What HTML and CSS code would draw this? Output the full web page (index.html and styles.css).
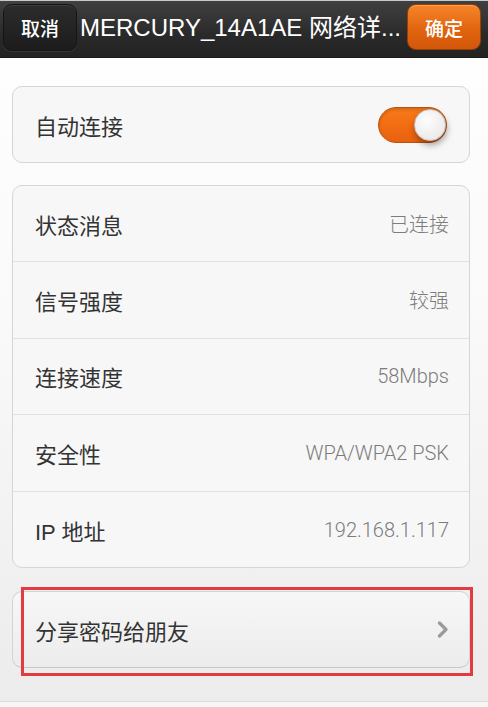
FILE: index.html
```html
<!DOCTYPE html>
<html lang="zh-CN">
<head>
<meta charset="utf-8">
<title>网络详情</title>
<link rel="stylesheet" href="styles.css">
</head>
<body>
<div class="page">
  <header class="topbar">
    <button class="btn btn-cancel">取消</button>
    <div class="title">MERCURY_14A1AE 网络详...</div>
    <button class="btn btn-ok">确定</button>
  </header>
  <main class="content">
    <section class="card">
      <div class="row">
        <span class="label">自动连接</span>
        <span class="toggle"><span class="knob"></span></span>
      </div>
    </section>
    <section class="card">
      <div class="row"><span class="label">状态消息</span><span class="value">已连接</span></div>
      <div class="row"><span class="label">信号强度</span><span class="value">较强</span></div>
      <div class="row"><span class="label">连接速度</span><span class="value">58Mbps</span></div>
      <div class="row"><span class="label">安全性</span><span class="value">WPA/WPA2 PSK</span></div>
      <div class="row"><span class="label">IP 地址</span><span class="value">192.168.1.117</span></div>
    </section>
    <section class="card card-action">
      <div class="row">
        <span class="label">分享密码给朋友</span>
        <svg class="chevron" width="12" height="17" viewBox="0 0 12 17"><path d="M2.5 2 L9 8.5 L2.5 15" fill="none" stroke="#9a9a9a" stroke-width="3.2" stroke-linecap="round" stroke-linejoin="round"/></svg>
      </div>
      <div class="highlight"></div>
    </section>
  </main>
  <footer class="bottom"></footer>
</div>
</body>
</html>
```
FILE: styles.css
```css
* { box-sizing: border-box; }
html, body { margin: 0; padding: 0; }
body {
  width: 488px;
  height: 707px;
  overflow: hidden;
  font-family: "Liberation Sans", "Noto Sans CJK SC", sans-serif;
  background: #ffffff;
}
.page {
  display: flex;
  flex-direction: column;
  height: 707px;
  background: linear-gradient(#ffffff 0px, #fafafa 300px, #ececec 700px);
}
.topbar {
  height: 58px;
  flex: none;
  display: flex;
  align-items: flex-start;
  padding: 3px 7px 0 3px;
  border-top: 1px solid #c9c9c9;
  background: linear-gradient(#404040, #2a2a2a 60%, #232323);
  border-bottom: 1px solid #1a1a1a;
}
.btn {
  flex: none;
  width: 74px;
  height: 47px;
  border-radius: 9px;
  font-family: "Noto Sans CJK SC", sans-serif;
  font-size: 19px;
  font-weight: 500;
  color: #ffffff;
  padding: 0;
  line-height: 45px;
}
.btn-cancel {
  background: linear-gradient(#2c2c2c, #1c1c1c);
  border: 1px solid #151515;
  box-shadow: inset 0 1px 0 rgba(255,255,255,0.08), 0 1px 0 rgba(255,255,255,0.08);
}
.btn-ok {
  height: 46px;
  background: linear-gradient(#f5862a, #e2640f 55%, #d2570a);
  border: 1px solid #9c3f05;
  box-shadow: inset 0 1px 0 rgba(255,255,255,0.25);
}
.title {
  flex: 1;
  min-width: 0;
  white-space: nowrap;
  overflow: hidden;
  color: #ffffff;
  font-size: 24px;
  line-height: 47px;
  padding-left: 3px;
}
.content {
  flex: 1;
  display: flex;
  flex-direction: column;
  gap: 22px;
  padding: 28px 18px 0 12px;
}
.card {
  position: relative;
  background: #f7f7f7;
  border: 1px solid #d6d6d6;
  border-radius: 10px;
}
.card + .card + .card { margin-top: 1px; }
.row {
  height: 76.6px;
  display: flex;
  align-items: center;
  justify-content: space-between;
  padding: 0 20px 0 22px;
  border-top: 1px solid #e2e2e2;
}
.row:first-child { border-top: none; height: 75px; }
.label {
  font-size: 22px;
  color: #333333;
}
.value {
  font-family: "Roboto", "Noto Sans CJK SC", sans-serif;
  font-weight: 300;
  font-size: 20px;
  color: #7c7c7c;
}
.toggle {
  position: relative;
  width: 69px;
  height: 36px;
  margin-right: 2px;
  border-radius: 18px;
  background: linear-gradient(#fa7a18, #e8600e);
  border: 1px solid #b85210;
  box-shadow: inset 0 2px 3px rgba(0,0,0,0.15);
}
.knob {
  position: absolute;
  right: 0px;
  top: 1px;
  width: 32px;
  height: 32px;
  border-radius: 50%;
  background: radial-gradient(circle at 40% 35%, #fdfdfd, #e4e4e4);
  border: 1px solid #c4c4c4;
  box-shadow: 1px 4px 6px rgba(0,0,0,0.35);
}
.card-action {
  background: linear-gradient(#f7f7f7, #ececec);
  border-color: #d4d4d4;
  border-bottom-color: #c8c8c8;
}
.highlight {
  position: absolute;
  left: 8px;
  top: -5px;
  width: 452px;
  height: 89px;
  border: 3px solid #e23b40;
}
.bottom {
  flex: none;
  height: 6px;
  border-top: 1px solid #dcdcdc;
  background: #f6f6f6;
}
```
